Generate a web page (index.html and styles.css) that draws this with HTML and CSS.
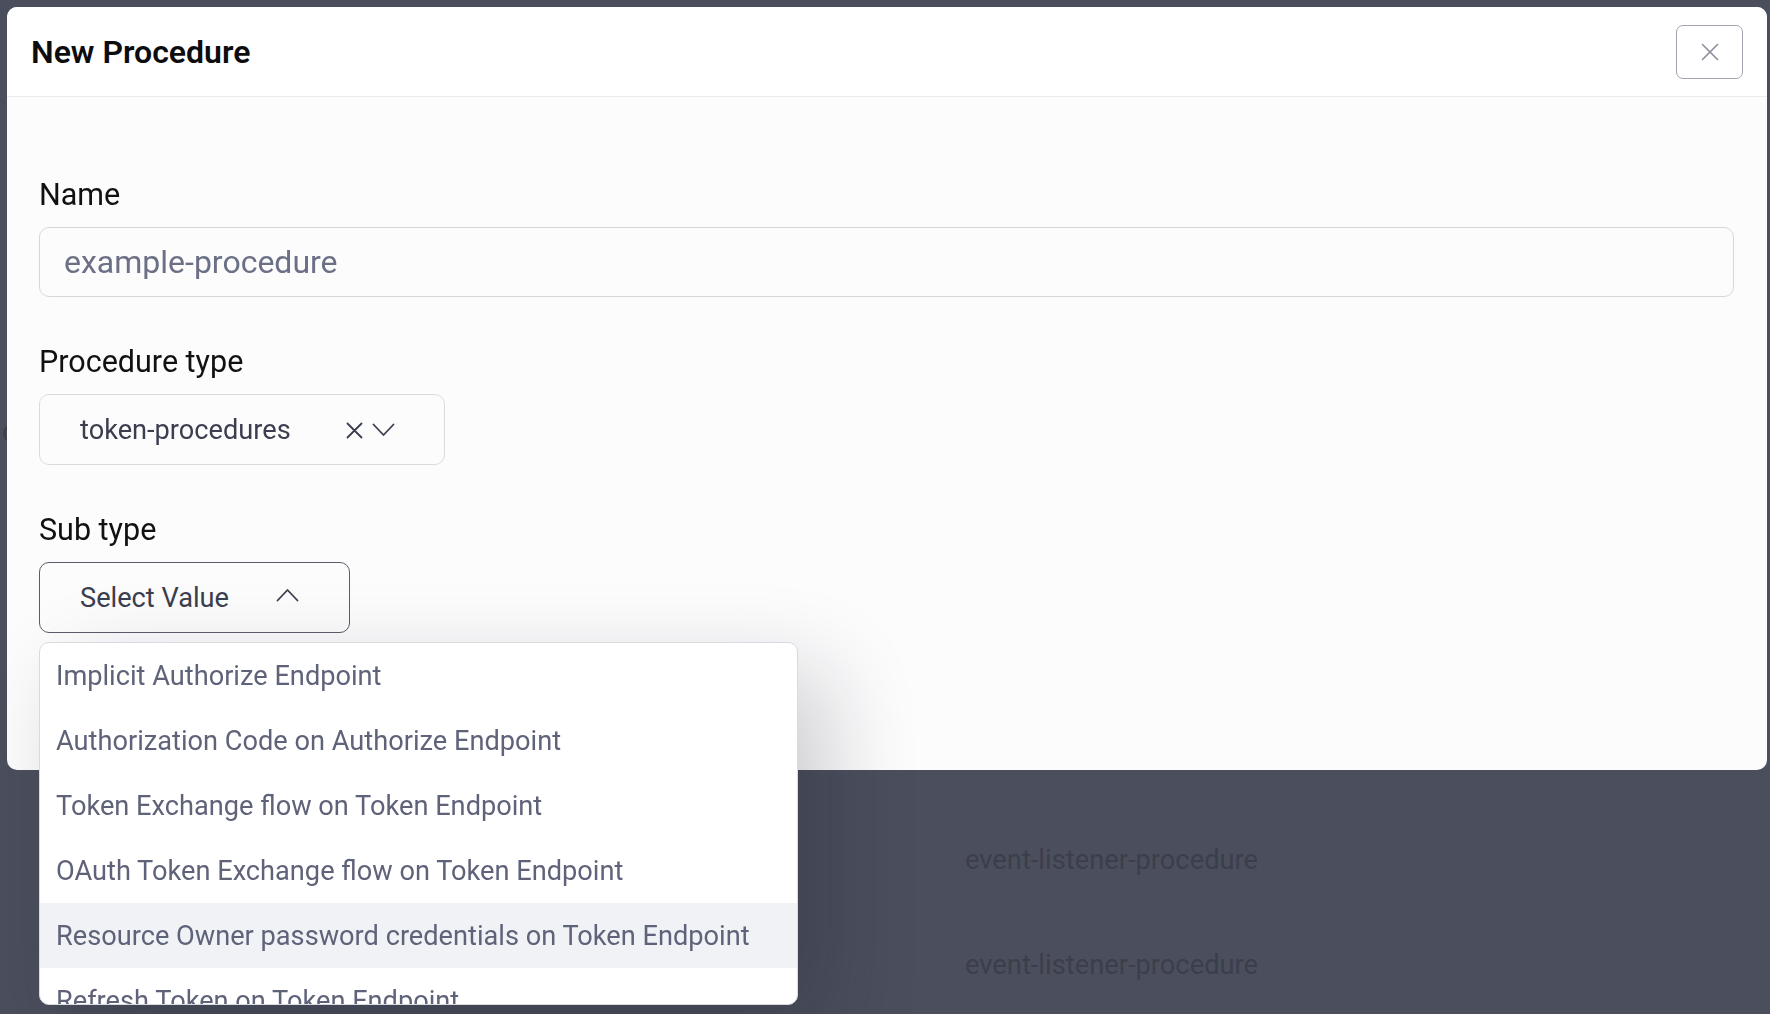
FILE: index.html
```html
<!DOCTYPE html>
<html lang="en">
<head>
<meta charset="utf-8">
<title>New Procedure</title>
<link rel="stylesheet" href="styles.css">
</head>
<body>
<div class="backdrop">
  <div class="peek-row">c</div>
  <div class="bg-list">
    <div class="bg-row">event-listener-procedure</div>
    <div class="bg-row">event-listener-procedure</div>
  </div>
</div>

<div class="modal">
  <div class="modal-header">
    <h2 class="modal-title">New Procedure</h2>
    <button class="close-btn" type="button" aria-label="Close">
      <svg width="18" height="18" viewBox="0 0 18 18"><path d="M1.5 1.5 L16.5 16.5 M16.5 1.5 L1.5 16.5" stroke="#8b8e9d" stroke-width="1.6" fill="none" stroke-linecap="round"/></svg>
    </button>
  </div>
  <div class="modal-body">
    <div class="field">
      <label class="field-label">Name</label>
      <div class="text-input">example-procedure</div>
    </div>
    <div class="field">
      <label class="field-label">Procedure type</label>
      <div class="select select-type">
        <span class="select-value">token-procedures</span>
        <span class="select-icons">
          <svg class="icon-x" width="17" height="17" viewBox="0 0 17 17"><path d="M1.5 1.5 L15.5 15.5 M15.5 1.5 L1.5 15.5" stroke="#3b3e4e" stroke-width="1.8" fill="none" stroke-linecap="round"/></svg>
          <svg class="icon-chev" width="23" height="14" viewBox="0 0 23 14"><path d="M1.5 1.5 L11.5 12 L21.5 1.5" stroke="#3b3e4e" stroke-width="1.8" fill="none" stroke-linecap="round" stroke-linejoin="round"/></svg>
        </span>
      </div>
    </div>
    <div class="field">
      <label class="field-label">Sub type</label>
      <div class="select-wrap">
        <div class="select select-sub">
          <span class="select-value">Select Value</span>
          <svg class="icon-chev" width="23" height="14" viewBox="0 0 23 14"><path d="M1.5 12.5 L11.5 2 L21.5 12.5" stroke="#3b3e4e" stroke-width="1.8" fill="none" stroke-linecap="round" stroke-linejoin="round"/></svg>
        </div>
        <ul class="dropdown">
          <li class="option">Implicit Authorize Endpoint</li>
          <li class="option">Authorization Code on Authorize Endpoint</li>
          <li class="option">Token Exchange flow on Token Endpoint</li>
          <li class="option">OAuth Token Exchange flow on Token Endpoint</li>
          <li class="option option-active">Resource Owner password credentials on Token Endpoint</li>
          <li class="option">Refresh Token on Token Endpoint</li>
          <li class="option">Client Credentials on Token Endpoint</li>
        </ul>
      </div>
    </div>
  </div>
</div>
</body>
</html>
```

FILE: styles.css
```css
* { box-sizing: border-box; }

html, body {
  margin: 0;
  padding: 0;
  width: 1770px;
  height: 1014px;
  overflow: hidden;
}

body {
  background: #4b4f5d;
  font-family: Roboto, "Liberation Sans", sans-serif;
  color: #111;
}

/* background page (behind overlay) */
.backdrop {
  display: flex;
  flex-direction: column;
  padding-top: 380px;
  color: #3b3e4b;
  font-size: 27.3px;
}
.peek-row {
  height: 105px;
  line-height: 105px;
  padding-left: 2px;
}
.bg-list {
  margin-top: 323px;
  display: flex;
  flex-direction: column;
}
.bg-row {
  height: 105px;
  line-height: 105px;
  padding-left: 965px;
}

/* modal */
.modal {
  position: fixed;
  top: 7px;
  left: 7px;
  width: 1760px;
  height: 763px;
  background: #fcfcfd;
  border-radius: 10px;
  display: flex;
  flex-direction: column;
}

.modal-header {
  height: 90px;
  flex: none;
  display: flex;
  align-items: center;
  justify-content: space-between;
  padding: 0 24px 0 24px;
  background: #ffffff;
  border-bottom: 1px solid #ececef;
  border-radius: 10px 10px 0 0;
}

.modal-title {
  margin: 0;
  font-size: 32px;
  font-weight: 600;
  color: #0d0d0f;
  letter-spacing: 0;
}

.close-btn {
  width: 67px;
  height: 54px;
  border: 1px solid #a2a4b0;
  border-radius: 7px;
  background: #fff;
  display: flex;
  align-items: center;
  justify-content: center;
  padding: 0;
  margin-top: 1px;
}

.modal-body {
  padding: 80px 33px 0 32px;
}

.field {
  margin-bottom: 47px;
}

.field-label {
  display: block;
  font-size: 30.5px;
  line-height: 36px;
  color: #111;
  margin-bottom: 14px;
}

.text-input {
  height: 70px;
  border: 1px solid #d5d7dd;
  border-radius: 10px;
  padding-left: 24px;
  display: flex;
  align-items: center;
  font-size: 32px;
  color: #6b7086;
  background: #fcfcfd;
}

.select {
  height: 71px;
  border-radius: 10px;
  display: flex;
  align-items: center;
  padding-left: 40px;
  font-size: 27.2px;
  color: #3b3e4e;
  background: #fcfcfd;
}

.select-type {
  width: 406px;
  border: 1px solid #dadbe0;
  padding-right: 49px;
}

.select-sub {
  width: 311px;
  border: 1px solid #5a5d6b;
  padding-right: 50px;
}

.select-value {
  flex: 1;
}

.select-icons {
  display: flex;
  align-items: center;
  gap: 9px;
}

.icon-x { margin-top: 1px; }
.icon-chev { display: block; }
.select-sub .icon-chev { margin-top: -6px; }

.select-wrap {
  position: relative;
}

.dropdown {
  position: absolute;
  top: 80px;
  left: 0;
  width: 759px;
  height: 363px;
  margin: 0;
  padding: 0;
  list-style: none;
  background: #fff;
  border: 1px solid #d9dae0;
  border-radius: 10px;
  overflow: hidden;
  box-shadow: 30px 30px 90px rgba(20, 22, 32, 0.20);
  z-index: 5;
}

.option {
  height: 65px;
  display: flex;
  align-items: center;
  padding-left: 16px;
  font-size: 27.2px;
  color: #5f6379;
  white-space: nowrap;
}

.option-active {
  background: #f1f2f6;
}
```
